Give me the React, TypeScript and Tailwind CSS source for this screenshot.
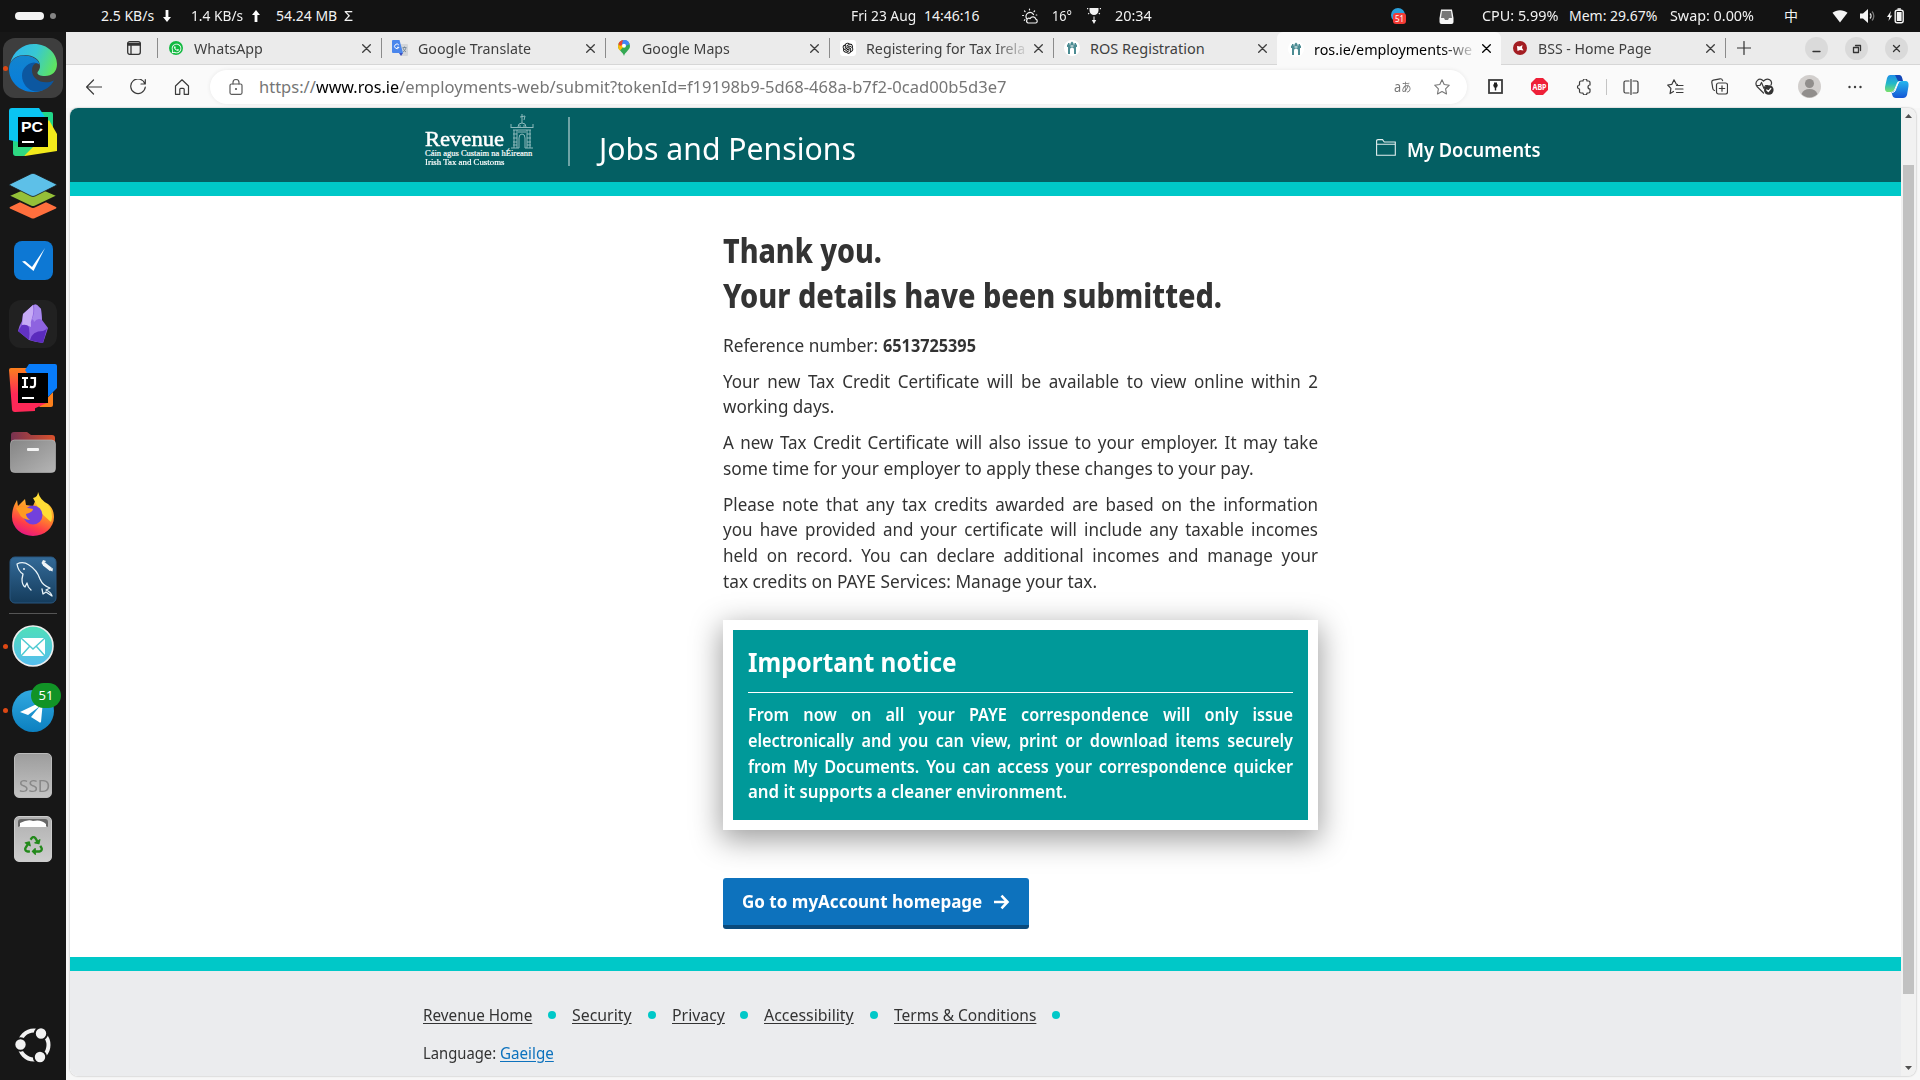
import { useLayoutEffect, useRef, useState, type ReactNode } from "react";
import { FaRecycle, FaWhatsapp } from "react-icons/fa";
import { AiOutlineOpenAI } from "react-icons/ai";

/* One line of text condensed or widened to an exact advance width. */
function Fit({ w, className = "", inner = "", children }: { w: number; className?: string; inner?: string; children: ReactNode }) {
  const ref = useRef<HTMLSpanElement>(null);
  const [k, setK] = useState(1);
  useLayoutEffect(() => {
    if (ref.current) setK(w / ref.current.offsetWidth);
  }, [w]);
  return (
    <span className={`block shrink-0 ${className}`} style={{ width: w }}>
      <span ref={ref} className={`inline-block origin-left whitespace-nowrap ${inner}`} style={{ transform: `scaleX(${k})` }}>
        {children}
      </span>
    </span>
  );
}

/* A line whose words are spread over the full width, with glyphs scaled by k. */
function Line({ w, k, children }: { w: number; k: number; children: ReactNode }) {
  return (
    <span
      className="block origin-left whitespace-nowrap [text-align-last:justify]"
      style={{ width: w / k, transform: `scaleX(${k})` }}
    >
      {children}
    </span>
  );
}

const stroke = { fill: "none", stroke: "currentColor", strokeLinecap: "round", strokeLinejoin: "round" } as const;

function TopBar() {
  return (
    <header className="flex h-8 shrink-0 items-center bg-[#131313] text-[14px] leading-[30px] text-[#f2f2f2]">
      <div className="ml-[15px] h-2 w-[29px] rounded-full bg-[#f4f4f4]" />
      <div className="ml-[6px] h-[6px] w-[6px] rounded-full bg-[#858585]" />
      <Fit w={53} className="ml-[45px]">2.5 KB/s</Fit>
      <svg className="ml-[9px] h-3 w-2" viewBox="0 0 8 12" fill="#fff"><path d="M2.6 0h2.8v7H8l-4 5-4-5h2.6z" /></svg>
      <Fit w={52} className="ml-[20px]">1.4 KB/s</Fit>
      <svg className="ml-[9px] h-3 w-2" viewBox="0 0 8 12" fill="#fff"><path d="M2.6 12h2.8V5H8L4 0 0 5h2.6z" /></svg>
      <Fit w={61} className="ml-[16px]">54.24 MB</Fit>
      <Fit w={9} className="ml-[7px]">Σ</Fit>
      <Fit w={65} className="ml-[498px]">Fri 23 Aug</Fit>
      <Fit w={56} className="ml-[8px]">14:46:16</Fit>
      <svg className="ml-[42px] h-4 w-4" viewBox="0 0 16 16" {...stroke} strokeWidth="1.2">
        <path d="M4.5 10.5a4 4 0 1 1 7-4M7.5 1v.8M2.5 3l.6.6M.6 7.5h.9M2.3 12.3l.6-.6M12.6 3l-.6.6M14.2 7h.6" />
        <path d="M6 15h7.5a2 2 0 0 0 .3-3.900 3 3 0 0 0-5.600-.5A2.300 2.300 0 0 0 6 15z" />
      </svg>
      <Fit w={20} className="ml-[14px]">16°</Fit>
      <svg className="ml-[15px] h-4 w-[14px]" viewBox="0 0 14 16" fill="#f2f2f2">
        <path d="M2.500 0h9v2.500a4.500 4.500 0 0 1-9 0zM6.500 8.500h1V12h1.700L7 16l-2.200-4h1.700zM0 0h1.200v1.200H0zM12.800 0H14v1.200h-1.200zM.8 5.500l1-.8.7.9-1 .8zM13.200 5.500l-1-.8-.7.9 1 .8z" />
      </svg>
      <Fit w={37} className="ml-[14px]">20:34</Fit>
      <svg className="ml-[239px] h-4 w-4" viewBox="0 0 16 16">
        <circle cx="7" cy="7" r="7" fill="#2ba0dc" />
        <rect x="2" y="5" width="13" height="11" rx="3" fill="#f33b35" />
        <text x="8.500" y="13.500" fontSize="8" textAnchor="middle" fill="#fff">51</text>
      </svg>
      <svg className="ml-[32px] h-[15px] w-[15px]" viewBox="0 0 15 15">
        <path d="M2 .5h11L14.500 9v4a2 2 0 0 1-2 2h-10a2 2 0 0 1-2-2V9z" fill="#f5f5f5" />
        <path d="M3 2h9l1 7h-3l-1 2H6L5 9H2z" fill="#777" />
      </svg>
      <Fit w={76} className="ml-[28px]">CPU: 5.99%</Fit>
      <Fit w={89} className="ml-[11px]">Mem: 29.67%</Fit>
      <Fit w={84} className="ml-[12px]">Swap: 0.00%</Fit>
      <Fit w={14} className="ml-[30px]">中</Fit>
      <svg className="ml-[34px] h-4 w-4" viewBox="0 0 16 16" fill="#f5f5f5"><path d="M8 14.500 .5 4.800C4.500 1.300 11.500 1.300 15.500 4.800z" /></svg>
      <svg className="ml-[12px] h-4 w-4" viewBox="0 0 16 16">
        <path d="M0 5.500h3L8 1v14L3 10.500H0z" fill="#f5f5f5" />
        <path d="M10 5.500a3.500 3.500 0 0 1 0 5" fill="none" stroke="#ddd" strokeWidth="1.300" />
        <path d="M12 3.500a6.500 6.500 0 0 1 0 9" fill="none" stroke="#777" strokeWidth="1.300" />
      </svg>
      <svg className="ml-[11px] h-4 w-[18px]" viewBox="0 0 18 16">
        <path d="M4 3 0 9h2.200L1.500 13 5.200 7.500H3z" fill="#f5f5f5" />
        <rect x="8.200" y="2.200" width="8" height="12.600" rx="2" fill="none" stroke="#f5f5f5" strokeWidth="1.400" />
        <path d="M10.500.3h3.400v1.500h-3.400zM9.800 4h4.800v9H9.800z" fill="#f5f5f5" />
      </svg>
    </header>
  );
}

function EdgeIcon() {
  return (
    <svg className="h-12 w-12" viewBox="0 0 48 48">
      <defs>
        <linearGradient id="e1" x1="0" y1=".3" x2="1" y2=".6"><stop offset="0" stopColor="#2fb7ee" /><stop offset=".5" stopColor="#38c8d2" /><stop offset="1" stopColor="#5fe55e" /></linearGradient>
        <linearGradient id="e2" x1="0" y1="0" x2="0" y2="1"><stop offset="0" stopColor="#1384ce" /><stop offset="1" stopColor="#067ddd" /></linearGradient>
      </defs>
      <path d="M1 20C4 7 14 0 25 0c14 0 23 10 23 20 0 8-5 12-12 12-5 0-8-1.500-7.500-3.500 0-1 2.500-2.500 2.500-6.500C31 15 24 11 16 11 9 11 3 14 1 20z" fill="url(#e1)" />
      <path d="M0 25C0 17 7 11.500 15 11.500c8 0 15 4 15.500 9C25 17 18 20 18 29c0 10 8 17 16 17-3 1.500-6 2-10 2C10 48 0 37 0 25z" fill="url(#e2)" />
      <path d="M25 18.500c-8 1-12 7-12 13 0 8 6 15 13 16 9 .5 16-5 19-11-11 5-22-1-22-10 0-4 1.500-6 4-7.500z" fill="#0c57a0" />
    </svg>
  );
}

function PyCharmIcon() {
  return (
    <svg className="h-12 w-12" viewBox="0 0 48 48">
      <path d="M25 4h17a2 2 0 0 1 2 2v28L10 48H7a3 3 0 0 1-3-3V30z" fill="#21d789" />
      <path d="m40 12 8 14v17L16 48l-6-2z" fill="#f3ea1b" />
      <path d="M5 38h20l-10 10H7a3 3 0 0 1-2-3z" fill="#2fd881" />
      <path d="M3 0h27l8 12-28 22L0 32V3a3 3 0 0 1 3-3z" fill="#0ac4f2" />
      <rect x="9" y="9" width="30" height="30" />
      <text x="12" y="24" fontSize="15" fontWeight="700" fontFamily="Liberation Sans" textLength="22" lengthAdjust="spacingAndGlyphs" fill="#fff">PC</text>
      <path d="M13 33h12v2H13z" fill="#fff" />
    </svg>
  );
}

function IntelliJIcon() {
  return (
    <svg className="h-12 w-12" viewBox="0 0 48 48">
      <defs><linearGradient id="ij" x1="0" y1="0" x2="0" y2="1"><stop offset="0" stopColor="#fc801d" /><stop offset=".6" stopColor="#fe2857" /></linearGradient></defs>
      <path d="M30 43h12a2 2 0 0 0 2-2V28z" fill="#fc801d" />
      <path d="M2 4h16l8 30v13l-20 1a3 3 0 0 1-3-3L0 6a2 2 0 0 1 2-2z" fill="url(#ij)" />
      <path d="M20 47 40 38H20z" fill="#fe2857" />
      <path d="M20 0h26a2 2 0 0 1 2 2v22l-12 12-20-30z" fill="#087cfa" />
      <rect x="9" y="9" width="30" height="30" />
      <path d="M13 14h6M16 14v9M13 23h6M21.500 14H26v6.500c0 3-3 3.200-5 2" fill="none" stroke="#fff" strokeWidth="2.200" />
      <path d="M13 33h12v2H13z" fill="#fff" />
    </svg>
  );
}

function Slot({ running = false, children }: { running?: boolean; children: ReactNode }) {
  return (
    <div className="relative flex h-16 w-[66px] shrink-0 items-center justify-center">
      {running && <span className="absolute left-[3px] z-10 h-[5px] w-[5px] rounded-full bg-[#dd4814]" />}
      {children}
    </div>
  );
}

function Dock() {
  return (
    <nav className="flex w-[66px] shrink-0 flex-col bg-[#171717] pt-1">
      <Slot running><div className="flex h-[60px] w-[60px] items-center justify-center rounded-xl bg-[#3e3e3e]"><EdgeIcon /></div></Slot>
      <Slot><PyCharmIcon /></Slot>
      <Slot>
        <svg className="h-[46px] w-12" viewBox="0 0 48 46">
          <path d="m1 34 23-11 23 11q1 .7 0 1.500L26 45q-2 1-4 0L1 35.500q-1-.8 0-1.500z" fill="#ff6f3d" />
          <path d="m1 22 23-10 23 10q1 .7 0 1.500L26 33.500q-2 1-4 0L1 23.500q-1-.8 0-1.500z" fill="#95c038" stroke="#171717" strokeWidth="1.800" />
          <path d="M1 11 22 .8q2-1 4 0L47 11q1 .7 0 1.500L26 23q-2 1-4 0L1 12.500q-1-.8 0-1.500z" fill="#5dc0e8" stroke="#171717" strokeWidth=".8" />
        </svg>
      </Slot>
      <Slot>
        <div className="flex h-[39px] w-[39px] items-center justify-center rounded-lg bg-[#0d78d4]">
          <svg className="h-6 w-6" viewBox="0 0 24 24" fill="#fff"><path d="M1 13.500 4 13l7 6L24 0 12.500 23z" /></svg>
        </div>
      </Slot>
      <Slot>
        <div className="flex h-12 w-12 items-center justify-center rounded-xl bg-[#212121]">
          <svg className="h-10 w-8" viewBox="0 0 32 40">
            <path d="M6 10 16 1q2-1 4 0l4 4 1 11 6 8-5 15q-8-1-14-3L1 27q1-5 4-10z" fill="#8e63e0" />
            <path d="M6 10 16 1q1 8-1 13-2 4-1 9-5-3-9-1z" fill="#c6abf5" />
            <path d="M17 1q2-1 3 0l4 4 1 11q-4-3-8 2 0-2-2-3 3-6 2-14z" fill="#a889ec" />
            <path d="M1 27 5 21q6-1 7 3 1 6 0 12z" fill="#6232c4" />
            <path d="M13 36q2-9 13-9 3-1 4-3l-4 15q-7-1-13-3z" fill="#5b2bbd" />
          </svg>
        </div>
      </Slot>
      <Slot><IntelliJIcon /></Slot>
      <Slot>
        <svg className="h-[42px] w-[46px]" viewBox="0 0 46 42">
          <defs>
            <linearGradient id="fo"><stop offset="0" stopColor="#773251" /><stop offset="1" stopColor="#d9512c" /></linearGradient>
            <linearGradient id="fg" x1="0" y1="0" x2="1" y2="1"><stop offset="0" stopColor="#858585" /><stop offset="1" stopColor="#b5b5b5" /></linearGradient>
          </defs>
          <path d="M1 4a3 3 0 0 1 3-3h13l4 3h21a3 3 0 0 1 3 3v8H1z" fill="url(#fo)" />
          <rect x=".5" y="9" width="45" height="32.500" rx="4" fill="url(#fg)" stroke="#bcbcbc" strokeWidth=".6" />
          <rect x="17" y="17" width="12" height="3" rx="1" fill="#f4f4f4" />
        </svg>
      </Slot>
      <Slot>
        <svg className="-mt-1 h-11 w-[42px]" viewBox="0 0 42 44">
          <defs><linearGradient id="ff" x1=".7" y1="0" x2=".3" y2="1"><stop offset="0" stopColor="#ffe43a" /><stop offset=".45" stopColor="#ff9128" /><stop offset=".75" stopColor="#ff3d48" /><stop offset="1" stopColor="#e31587" /></linearGradient></defs>
          <path d="M27 0c-2 3-2 6 0 9 5 4 7 6 8 9 2 0 2-3 1-6 4 3 6 8 6 13a21 19 0 0 1-42 0C0 18 2 13 5 8l1 6 7-7 1 6 7 1z" fill="url(#ff)" />
          <path d="M21 6q5-1 5-6 2 8 10 12 6 10 3 18l-10-9z" fill="#ffdd36" />
          <circle cx="21" cy="23" r="9.500" fill="#7240dd" />
          <path d="M4 16q7-3 12 0l5 1q0 3-7 5 0 3 4 6-9-1-11-7z" fill="#ff9a22" />
        </svg>
      </Slot>
      <Slot>
        <svg className="h-12 w-12" viewBox="0 0 48 48">
          <defs><linearGradient id="my" x1="0" y1="0" x2="0" y2="1"><stop offset="0" stopColor="#336a98" /><stop offset="1" stopColor="#153c5c" /></linearGradient></defs>
          <rect x="1" y="1" width="46" height="46" rx="5" fill="url(#my)" stroke="#295780" />
          <path d="M22 34q-3.500-3-4-7l-2 4q-3-2-3-8l1-5q-5-3-6-10 6-3 12 1 8 5 11 14 3 7 10 9l-4 2q5 2 6 6l-6-4-3 2-1-5" {...stroke} stroke="#e8f3f8" strokeWidth="1.300" />
          <circle cx="15" cy="13" r=".9" fill="#fff" />
          <path d="m35 8 7 5.500" stroke="#f0f5f8" strokeWidth="3.500" />
          <path d="m34 4 3 1-1.500 2 2 1-3 2-2-3zM40 14l4-2-.5 3.500z" fill="#f0f5f8" />
        </svg>
      </Slot>
      <div className="mt-px mx-[9px] h-px bg-[#555]" />
      <Slot running>
        <svg className="h-[42px] w-[42px]" viewBox="0 0 42 42">
          <defs><linearGradient id="ml" x1="0" y1="0" x2="0" y2="1"><stop offset="0" stopColor="#4fe0b8" /><stop offset="1" stopColor="#55bdf0" /></linearGradient></defs>
          <circle cx="21" cy="21" r="20" fill="url(#ml)" stroke="#eee" strokeWidth="1.600" />
          <rect x="9" y="13" width="24" height="18" fill="#fff" />
          <path d="m9 13 12 11 12-11M9 31l8.500-9.500M33 31l-8.500-9.500" fill="none" stroke="#50cbd2" strokeWidth="1.500" />
        </svg>
      </Slot>
      <Slot running>
        <svg className="mt-px h-[42px] w-[42px]" viewBox="0 0 42 42">
          <defs><linearGradient id="tg" x1="0" y1="0" x2="0" y2="1"><stop offset="0" stopColor="#31a9e0" /><stop offset="1" stopColor="#0c80c0" /></linearGradient></defs>
          <circle cx="21" cy="21" r="21" fill="url(#tg)" />
          <path d="M8 22 31 11l-2 21q-1 1-2 0l-8-5 9-11-12 9z" fill="#fff" />
        </svg>
        <span className="absolute right-[5px] top-[5px] flex h-[25px] w-[30px] items-center justify-center rounded-full bg-[#119326] text-[13px] text-white">51</span>
      </Slot>
      <Slot>
        <div className="mt-[2px] flex h-[45px] w-[38px] items-end justify-center rounded-[5px] border border-[#bbb] bg-gradient-to-b from-[#9d9d9d] to-[#c3c3c3] text-[#888]">
          <Fit w={31} className="ml-[3px] text-[16px] leading-[22px]">SSD</Fit>
        </div>
      </Slot>
      <Slot>
        <div className="relative mt-[2px] flex h-[46px] w-[38px] items-center justify-center rounded-[5px] border border-[#ccc] bg-gradient-to-b from-[#b0b0b0] to-[#cdcdcd] pt-3">
          <svg className="absolute left-[3px] top-[2px] h-2 w-[30px]" viewBox="0 0 30 8"><path d="M0 8V3q0-3 3-3h24q3 0 3 3v5l-2-1H2z" fill="#666" /><path d="M2 8V4q8-4 13-2 8-2 13 3v3z" fill="#fff" /></svg>
          <FaRecycle className="h-[19px] w-[19px] text-[#23891b]" />
        </div>
      </Slot>
      <div className="grow" />
      <Slot>
        <svg className="h-[36px] w-[36px]" viewBox="0 0 36 36">
          <circle cx="19" cy="18" r="14.500" fill="none" stroke="#f2f2f2" strokeWidth="4" />
          <g fill="#f2f2f2" stroke="#171717" strokeWidth="2">
            <circle cx="5.500" cy="17.500" r="6.200" /><circle cx="26" cy="6.500" r="6.200" /><circle cx="25" cy="30" r="6.200" />
          </g>
        </svg>
      </Slot>
      <div className="h-[3px]" />
    </nav>
  );
}

function Arch({ className = "" }: { className?: string }) {
  return (
    <svg className={className} viewBox="0 0 16 16" fill="#4c8c93">
      <path d="M3 4.500h1V3h1.500v1.500h1V3L8 1.500 9.500 3v1.500h1V3H12v1.500h1V7h-1v7h-2V9.500a2 2 0 0 0-4 0V14H4V7H3z" />
      <path d="M6.500 5.500h3v1h-3z" fill="#fff" />
    </svg>
  );
}

function TabX({ dark = false }: { dark?: boolean }) {
  return (
    <svg className={`h-[9px] w-[9px] shrink-0 ${dark ? "text-black" : "text-[#3c3c3c]"}`} viewBox="0 0 9 9" {...stroke} strokeWidth="1.300">
      <path d="m.7.7 7.600 7.600M8.300.7.7 8.300" />
    </svg>
  );
}

function Tab({ icon, title, w, sep = true, active = false, fade = false }: { icon: ReactNode; title: string; w: number; sep?: boolean; active?: boolean; fade?: boolean }) {
  return (
    <div className={`flex h-[33px] w-[224px] shrink-0 items-center ${active ? "rounded-t-md bg-[#fafafa] text-black" : "border-b border-[#d6d6d6] text-[#3f3f3f]"}`}>
      <div className={`h-5 w-px ${sep ? "bg-[#8b8b8b]" : ""}`} />
      <div className="ml-[10px] flex h-4 w-4 items-center justify-center">{icon}</div>
      <div className={`ml-[10px] w-[161px] text-[14.500px] leading-[30px] ${fade ? "[mask-image:linear-gradient(to_right,#000_128px,transparent_164px)]" : ""}`}>
        <Fit w={w}>{title}</Fit>
      </div>
      <div className="ml-[7px]"><TabX dark={active} /></div>
    </div>
  );
}

function TabStrip() {
  return (
    <div className="flex h-[33px] shrink-0 items-center bg-[#ebebeb]">
      <div className="flex h-[33px] w-[91px] items-center border-b border-[#d6d6d6]">
        <svg className="ml-[61px] h-[14px] w-[14px] text-[#333]" viewBox="0 0 14 14" {...stroke} strokeWidth="1.300">
          <rect x=".7" y=".7" width="12.600" height="12.600" rx="2" /><path d="M.7 2.500h12.600M.7 4h12.600M4 4v9" />
        </svg>
      </div>
      <Tab title="WhatsApp" w={69} icon={<span className="flex h-[14px] w-[14px] items-center justify-center rounded-full bg-[#12b940]"><FaWhatsapp className="h-[11px] w-[11px] text-white" /></span>} />
      <Tab title="Google Translate" w={113} icon={
        <svg className="h-4 w-4" viewBox="0 0 16 16"><path d="M7 4h8q1 0 1 1v10q0 1-1 1H9z" fill="#d4d6d9" /><path d="M1 0h6.500L11 13H1q-1 0-1-1V1q0-1 1-1z" fill="#4a86ec" /><path d="M7 13h4l-2 3z" fill="#3b50c0" /><path d="M6.800 5A2.300 2.300 0 1 0 7 7.300H5" fill="none" stroke="#fff" /><path d="M10.500 7.500h4M12.500 6.500v1M11 8q1 3 3 4M14 8q-1 3-3 4" fill="none" stroke="#6b7f92" strokeWidth=".8" /></svg>
      } />
      <Tab title="Google Maps" w={88} icon={
        <svg className="h-4 w-3" viewBox="0 0 12 16"><path d="M6 16C5 12 0 10 0 6a6 6 0 0 1 12 0c0 4-5 6-6 10z" fill="#34a853" /><path d="M0 6q0 3 2 4.500L8 4 3 1Q0 3 0 6z" fill="#fbbc04" /><path d="M.5 4Q2 0 6 0L4 5 2 6z" fill="#ea4335" /><path d="M5 0q5-1 6.500 4L6 7 4 4z" fill="#4285f4" /><circle cx="6" cy="5.800" r="2" fill="#fff" /></svg>
      } />
      <Tab title="Registering for Tax Irela" w={159} fade icon={<span className="flex h-4 w-4 items-center justify-center rounded-[3px] bg-white"><AiOutlineOpenAI className="h-[14px] w-[14px] text-black" /></span>} />
      <Tab title="ROS Registration" w={115} icon={<span className="rounded-full bg-white"><Arch className="h-4 w-4" /></span>} />
      <Tab title="ros.ie/employments-we" w={158} fade active sep={false} icon={<span className="rounded-full bg-white"><Arch className="h-4 w-4" /></span>} />
      <Tab title="BSS - Home Page" w={114} sep={false} icon={
        <svg className="h-[14px] w-[14px]" viewBox="0 0 14 14"><circle cx="7" cy="7" r="7" fill="#a31d22" /><path d="m4 5 3 .5L9.500 4 9 7l1.500 2.500L7 9l-2.500 1z" fill="#fff" /></svg>
      } />
      <div className="flex h-[33px] grow items-center border-b border-[#d6d6d6]">
        <div className="h-5 w-px bg-[#8b8b8b]" />
        <svg className="ml-[11px] h-[14px] w-[14px] text-[#333]" viewBox="0 0 14 14" {...stroke} strokeWidth="1.200"><path d="M7 .5v13M.5 7h13" /></svg>
        <div className="ml-[54px] flex gap-[17px] text-[#333]">
          {["M8 14.500h7", "M8.500 10.500h5v5h-5zM10.500 8.500h5v5", "m8.500 8.500 6 6M14.500 8.500l-6 6"].map((d) => (
            <svg key={d} className="h-[23px] w-[23px] rounded-full bg-[#dadada]" viewBox="0 0 23 23" {...stroke} strokeWidth="1.300"><path d={d} /></svg>
          ))}
        </div>
      </div>
    </div>
  );
}

function Toolbar() {
  return (
    <div className="flex h-[43px] shrink-0 items-center bg-[#fafafa] text-[#3b3b3b]">
      <svg className="ml-5 h-4 w-4" viewBox="0 0 16 16" {...stroke} strokeWidth="1.200"><path d="M15.500 8H.8M7.500 1 .6 8l6.900 7" /></svg>
      <svg className="ml-7 h-4 w-4" viewBox="0 0 16 16" {...stroke} strokeWidth="1.200"><path d="M15 5A7.300 7.300 0 1 0 15.300 8M15.300.7V5H11" /></svg>
      <svg className="ml-7 h-4 w-4" viewBox="0 0 16 16" {...stroke} strokeWidth="1.200"><path d="M1.500 7 8 .8 14.500 7v8.300h-4.300v-5q0-1-1-1H6.800q-1 0-1 1v5H1.500z" /></svg>
      <div className="ml-[20px] flex h-[34px] w-[1257px] shrink-0 items-center rounded-full bg-white shadow-[0_0_4px_rgba(0,0,0,0.08)]">
        <svg className="ml-[19px] h-4 w-[14px] text-[#5c5c5c]" viewBox="0 0 14 16" {...stroke} strokeWidth="1.200"><rect x="1" y="5" width="12" height="10.300" rx="1.500" /><path d="M4 5V3.500a3 3 0 0 1 6 0V5" /><circle cx="7" cy="10" r=".5" fill="currentColor" /></svg>
        <div className="ml-[16px] flex text-[16.500px] leading-[32px] text-[#767676]">
          <Fit w={57}>https://</Fit>
          <Fit w={83} className="text-black">www.ros.ie</Fit>
          <Fit w={607}>/employments-web/submit?tokenId=f19198b9-5d68-468a-b7f2-0cad00b5d3e7</Fit>
        </div>
        <div className="ml-[388px] flex items-center text-[#777]">
          <Fit w={17} className="text-[12px] leading-[20px]"><span className="text-[15px]">a</span>あ</Fit>
          <svg className="ml-[23px] h-4 w-4" viewBox="0 0 16 16" {...stroke} strokeWidth="1.100"><path d="m8 .8 2.200 4.700 5.100.7-3.700 3.600.9 5.100L8 12.500l-4.500 2.400.9-5.100L.7 6.200l5.100-.7z" /></svg>
        </div>
      </div>
      <svg className="ml-[21px] h-[15px] w-[15px]" viewBox="0 0 15 15"><rect x="1" y="1" width="13" height="13" fill="#fff" stroke="#3c3c3c" strokeWidth="1.800" /><path d="M6 3.500h3v2h1L9 8.500h-.8v3H6.800v-3H6l-1-3h1z" fill="#222" /></svg>
      <svg className="ml-[28px] h-[17px] w-[17px]" viewBox="0 0 17 17"><path d="M5 0h7l5 5v7l-5 5H5l-5-5V5z" fill="#ee2038" /><text x="8.500" y="11.500" fontSize="8" fontWeight="700" textLength="14" lengthAdjust="spacingAndGlyphs" textAnchor="middle" fill="#fff">ABP</text></svg>
      <svg className="ml-[28px] h-4 w-4" viewBox="0 0 16 16" {...stroke} strokeWidth="1.200"><path d="M5 2h2a2 2 0 0 1 4 0h1.500Q14 2 14 3.500V6a1.500 1.500 0 0 0 0 4v2.500q0 1.500-1.500 1.500H11a2 2 0 0 1-4 0H5q-1.500 0-1.500-1.500V10a2 2 0 0 1 0-4V3.500Q3.500 2 5 2z" /></svg>
      <div className="ml-[14px] h-4 w-px bg-[#c4c4c4]" />
      <svg className="ml-[16px] h-4 w-4" viewBox="0 0 16 16" {...stroke} strokeWidth="1.200"><path d="M6 2H2.500Q1 2 1 3.500v9Q1 14 2.500 14H6M10 2h3.500Q15 2 15 3.500v9q0 1.500-1.500 1.500H10M8 .5v15" /></svg>
      <svg className="ml-[28px] h-4 w-[17px]" viewBox="0 0 17 16" {...stroke} strokeWidth="1.200"><path d="M10.500 5.500 9.200 5 7 .8 4.900 5.300.7 6l3.200 3.400-.8 5.200L6.500 12.500M9.500 6.500H16M8.500 10H16M9.500 13.500H16" /></svg>
      <svg className="ml-[27px] h-[17px] w-[17px]" viewBox="0 0 17 17" {...stroke} strokeWidth="1.200"><rect x="5.500" y="5" width="11" height="11" rx="2" /><path d="M11 7.800v5.400M8.300 10.500h5.400M3.500 12.500Q2 12 1.800 10.500L.8 4.300Q.6 2.500 2.300 2.100L9 .8q2-.3 2.600 1.800" /></svg>
      <svg className="ml-[27px] h-[17px] w-[19px]" viewBox="0 0 19 17" {...stroke} strokeWidth="1.200"><path d="M8.500 15 2 8.500C-1 4 4-1.500 8.500 3 13-1.500 18 3 16 7M1.500 7.500H5l1.500-3 2.500 6 1.500-3h2" /><circle cx="13.800" cy="12" r="4.800" fill="#333" stroke="none" /><path d="m11.800 12 1.500 1.500 2.500-3" stroke="#fff" /></svg>
      <svg className="ml-[24px] h-[23px] w-[23px] rounded-full bg-[#d2cfcd]" viewBox="0 0 23 23" fill="#918e8c"><circle cx="11.500" cy="8.500" r="4.500" /><path d="M3.500 19q2-5 8-5t8 5a11 11 0 0 1-16 0z" /></svg>
      <svg className="ml-[26px] h-4 w-4" viewBox="0 0 16 16" fill="#3b3b3b"><circle cx="2.500" cy="8" r="1.200" /><circle cx="8" cy="8" r="1.200" /><circle cx="13.500" cy="8" r="1.200" /></svg>
      <svg className="ml-[22px] h-[23px] w-6" viewBox="0 0 24 23">
        <defs>
          <linearGradient id="cp" x1="0" y1="0" x2="0" y2="1"><stop offset="0" stopColor="#1f8fe8" /><stop offset=".5" stopColor="#22b8c8" /><stop offset="1" stopColor="#7be06a" /></linearGradient>
          <linearGradient id="cq" x1="0" y1="0" x2="0" y2="1"><stop offset="0" stopColor="#25b7ee" /><stop offset="1" stopColor="#1455d6" /></linearGradient>
        </defs>
        <path d="M5 0h8q3 0 3.500 3l.5 3h-2q-2.500 0-3.500 3l-2 5q-1 3-4 3H3q-3.500 0-3-5L2 3q1-3 3-3z" fill="url(#cp)" />
        <path d="M10 0h4q2.500 0 3.200 3l.8 3h-5z" fill="#1347b8" />
        <path d="M18 23h-7q-3 0-3.700-3L6.500 17q3 0 4-3l2.500-5q1-3 4-3h3.500q3.500 0 3 5L22 20q-1 3-4 3z" fill="url(#cq)" />
        <path d="m13.500 7-3.500 9q-1 1.500-3 1.500" fill="none" stroke="#fafafa" />
      </svg>
    </div>
  );
}

function RevenueHeader() {
  return (
    <div className="flex h-[88px] shrink-0 items-start border-b-[14px] border-[#00c8c8] bg-[#045f63] text-white">
      <div className="ml-[355px] mt-[6px] w-[110px] font-['Liberation_Serif',serif]">
        <div className="flex h-[36px] items-end">
          <Fit w={79} className="text-[22px] leading-[22px] [-webkit-text-stroke:0.5px_white]">Revenue</Fit>
          <svg className="ml-[6px] h-[36px] w-[24px]" viewBox="0 0 24 36" fill="none" stroke="#8dbabc" strokeWidth="1">
            <path d="M12 0v9M10 3l5-1-1 4M8 13q0-4 4-4t4 4M1 10v4M23 10v4M1 13.500h22M3 16h18M4 16v18M7 16v18M17 16v18M20 16v18M1 34h8M15 34h8M9 34V24q0-4 3-4t3 4v10M8 18h8M10 11v3M14 11v3M3 20h4M17 20h4M3 24h4M17 24h4M3 28h4M17 28h4M3 31h4M17 31h4" />
          </svg>
        </div>
        <Fit w={107} className="mt-[-1px] text-[8.500px] leading-[9px] [-webkit-text-stroke:0.2px_white]">Cáin agus Custaim na hÉireann</Fit>
        <Fit w={79} className="text-[8.500px] leading-[9px] [-webkit-text-stroke:0.2px_white]">Irish Tax and Customs</Fit>
      </div>
      <div className="ml-[33px] mt-[9px] h-[49px] w-[2px] bg-[#6fa4a6]" />
      <Fit w={257} className="ml-[29px] mt-[18px] text-[31px] leading-[44px]">Jobs and Pensions</Fit>
      <svg className="ml-[520px] mt-[31px] h-[17px] w-[20px]" viewBox="0 0 20 17" fill="none" stroke="#e3efef" strokeWidth="1.100"><path d="M.6 16.300V2Q.6.600 2 .6h4.500L8.300 3h11v13.300zM.6 5.300h19" /></svg>
      <Fit w={134} className="ml-[11px] mt-[27px] text-[19.500px] leading-[30px] font-semibold">My Documents</Fit>
    </div>
  );
}

const PARAGRAPHS = [
  { full: ["Your new Tax Credit Certificate will be available to view online within 2"], last: "working days.", w: 111 },
  { full: ["A new Tax Credit Certificate will also issue to your employer. It may take"], last: "some time for your employer to apply these changes to your pay.", w: 531 },
  {
    full: [
      "Please note that any tax credits awarded are based on the information",
      "you have provided and your certificate will include any taxable incomes",
      "held on record. You can declare additional incomes and manage your",
    ],
    last: "tax credits on PAYE Services: Manage your tax.",
    w: 374,
  },
];

const NOTICE = [
  "From now on all your PAYE correspondence will only issue",
  "electronically and you can view, print or download items securely",
  "from My Documents. You can access your correspondence quicker",
];

const LINKS: [string, number][] = [
  ["Revenue Home", 109],
  ["Security", 59.5],
  ["Privacy", 52.5],
  ["Accessibility", 89.5],
  ["Terms & Conditions", 142.5],
];

function Confirmation() {
  return (
    <main className="ml-[653px] w-[595px] shrink-0 pt-[31.500px] text-[18px] leading-[25.700px] text-[#333]">
      <h1 className="text-[33px] leading-[45px] font-extrabold">
        <Fit w={159}>Thank you.</Fit>
        <Fit w={499}>Your details have been submitted.</Fit>
      </h1>
      <div className="mt-[15.500px] flex">
        <Fit w={155}>Reference number:</Fit>
        <Fit w={93} className="ml-[5px] font-bold">6513725395</Fit>
      </div>
      {PARAGRAPHS.map((p) => (
        <p key={p.last} className="mt-[10px]">
          {p.full.map((t) => <Line key={t} w={595} k={0.945}>{t}</Line>)}
          <Fit w={p.w}>{p.last}</Fit>
        </p>
      ))}
      <section className="mt-[26px] h-[210px] bg-white px-[10px] py-[10px] shadow-[0_8px_28px_2px_rgba(0,0,0,0.38)]">
        <div className="h-[190px] bg-[#009999] px-[15px] pt-[14px] text-white">
          <h2 className="h-[49px] border-b border-white text-[27.500px] leading-[36px] font-bold"><Fit w={209}>Important notice</Fit></h2>
          <p className="mt-[9px] font-semibold">
            {NOTICE.map((t) => <Line key={t} w={545} k={0.903}>{t}</Line>)}
            <Fit w={319}>and it supports a cleaner environment.</Fit>
          </p>
        </div>
      </section>
      <button className="mt-[48px] flex h-[51px] w-[306px] items-center rounded-[3px] border-b-4 border-[#0a4a7c] bg-[#0d72bd] pl-[19px] text-white">
        <Fit w={240} className="text-[18px] font-bold">Go to myAccount homepage</Fit>
        <svg className="ml-[12px] h-4 w-4" viewBox="0 0 16 16" fill="none" stroke="#fff" strokeWidth="2.600"><path d="M0 8h13M7.500 1.700 13.500 8l-6 6.300" /></svg>
      </button>
    </main>
  );
}

function Footer() {
  return (
    <footer className="mt-[28px] grow border-t-[14px] border-[#00c8c8] bg-[#ebecee] pl-[353px] pt-[32px] text-[16px] leading-[24px] text-[#333]">
      <div className="flex items-center">
        {LINKS.map(([t, w]) => (
          <div key={t} className="flex items-center">
            <Fit w={w} inner="underline underline-offset-2">{t}</Fit>
            <span className="mx-[16px] h-2 w-2 rounded-full bg-[#00c8c8]" />
          </div>
        ))}
      </div>
      <div className="mt-[14px] flex">
        <Fit w={73}>Language:</Fit>
        <Fit w={54} className="ml-[4px] text-[#0d72bd]" inner="underline underline-offset-2">Gaeilge</Fit>
      </div>
    </footer>
  );
}

function Scrollbar() {
  return (
    <div className="flex w-[15px] shrink-0 flex-col items-center bg-[#f1f1f1] pt-[6px] pb-[6px]">
      <svg className="h-1 w-[7px]" viewBox="0 0 7 4" fill="#505050"><path d="M3.500 0 7 4H0z" /></svg>
      <div className="mt-[47px] h-[829px] w-[11px] bg-[#c1c1c1]" />
      <div className="grow" />
      <svg className="h-1 w-[7px]" viewBox="0 0 7 4" fill="#505050"><path d="M3.500 4 7 0H0z" /></svg>
    </div>
  );
}

export default function App() {
  return (
    <div className="flex h-[1080px] w-[1920px] flex-col overflow-hidden bg-[#171717] font-['Noto_Sans','Noto_Sans_CJK_SC',sans-serif]">
      <TopBar />
      <div className="flex grow">
        <Dock />
        <div className="flex w-[1854px] flex-col bg-[#f7f7f7]">
          <TabStrip />
          <Toolbar />
          <div className="ml-1 flex h-[968px] w-[1846px] overflow-hidden rounded-lg shadow-[0_0_2px_rgba(0,0,0,0.35)]">
            <div className="flex w-[1831px] flex-col bg-white">
              <RevenueHeader />
              <Confirmation />
              <Footer />
            </div>
            <Scrollbar />
          </div>
        </div>
      </div>
    </div>
  );
}
